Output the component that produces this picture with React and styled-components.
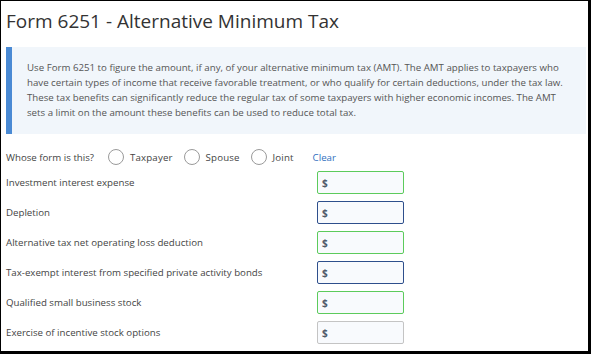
import React from "react"
import styled, { createGlobalStyle, css } from "styled-components"

const GlobalStyle = createGlobalStyle`
  html, body {
    margin: 0;
    padding: 0;
    background: #fff;
  }
  body {
    font-family: "Open Sans", "Liberation Sans", sans-serif;
  }
`;

const Frame = styled.div`
  box-sizing: border-box;
  width: 591px;
  height: 354px;
  border-top: 1px solid #000;
  border-left: 1px solid #000;
  border-right: 3px solid #000;
  border-bottom: 3px solid #000;
  overflow: hidden;
  padding: 0 2px 0 5px;
`;

const Title = styled.h1`
  margin: 7px 0 0 0;
  font-size: 19px;
  font-weight: 400;
  color: #333;
  line-height: 26px;
`;

const Notice = styled.div`
  margin-top: 13px;
  background: #f1f6fb;
  border-left: 6px solid #4a8ad4;
  padding: 13px 20px 14px 15px;
  font-size: 9.7px;
  line-height: 15px;
  color: #555;
`;

const OwnerRow = styled.div`
  display: flex;
  align-items: center;
  margin-top: 13px;
  height: 20px;
  font-size: 9.7px;
  color: #444;
`;

const Question = styled.span`
  margin-right: 14px;
`;

const Choice = styled.label`
  display: flex;
  align-items: center;
  gap: 6px;
  margin-right: ${p => p.$gap || 11}px;
  letter-spacing: 0.15px;
`;

const Radio = styled.span`
  box-sizing: border-box;
  width: 16px;
  height: 16px;
  border-radius: 50%;
  border: 1px solid #9a9a9a;
  background: #fff;
`;

const ClearLink = styled.a`
  color: #2f6fc0;
  cursor: pointer;
`;

const FieldList = styled.div`
  display: flex;
  flex-direction: column;
  gap: 7px;
  margin-top: 4px;
`;

const FieldRow = styled.div`
  display: flex;
  align-items: center;
  height: 23px;
`;

const FieldLabel = styled.div`
  width: 311px;
  font-size: 9.7px;
  color: #444;
`;

const AmountBox = styled.div`
  box-sizing: border-box;
  width: 87px;
  height: 23px;
  display: flex;
  align-items: center;
  padding-left: 4px;
  background: #f8fafd;
  border: 1px solid #c4c4c4;
  border-radius: 2px;
  font-size: 10px;
  font-weight: 700;
  color: #505a6a;
  ${p => p.$state === "valid" && css`
    border-color: #5ccb5c;
  `}
  ${p => p.$state === "focus" && css`
    border-color: #2e4f8c;
  `}
`;

const fields = [
  { label: "Investment interest expense", state: "valid" },
  { label: "Depletion", state: "focus" },
  { label: "Alternative tax net operating loss deduction", state: "valid" },
  { label: "Tax-exempt interest from specified private activity bonds", state: "focus" },
  { label: "Qualified small business stock", state: "valid" },
  { label: "Exercise of incentive stock options", state: "plain" },
];

export default function App() {
  return (
    <>
      <GlobalStyle />
      <Frame>
        <Title>Form 6251 - Alternative Minimum Tax</Title>
        <Notice>
          Use Form 6251 to figure the amount, if any, of your alternative minimum tax (AMT). The AMT applies to taxpayers who
          have certain types of income that receive favorable treatment, or who qualify for certain deductions, under the tax law.
          These tax benefits can significantly reduce the regular tax of some taxpayers with higher economic incomes. The AMT
          sets a limit on the amount these benefits can be used to reduce total tax.
        </Notice>
        <OwnerRow>
          <Question>Whose form is this?</Question>
          <Choice><Radio />Taxpayer</Choice>
          <Choice><Radio />Spouse</Choice>
          <Choice $gap={19}><Radio />Joint</Choice>
          <ClearLink>Clear</ClearLink>
        </OwnerRow>
        <FieldList>
          {fields.map(f => (
            <FieldRow key={f.label}>
              <FieldLabel>{f.label}</FieldLabel>
              <AmountBox $state={f.state}>$</AmountBox>
            </FieldRow>
          ))}
        </FieldList>
      </Frame>
    </>
  )
}
